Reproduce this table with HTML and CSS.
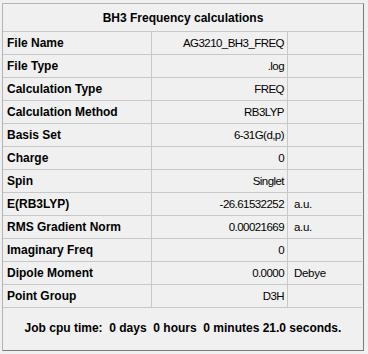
FILE: index.html
```html
<!DOCTYPE html>
<html lang="en">
  <head>
    <meta charset="UTF-8" />
    <title>BH3 Frequency calculations</title>
    <link rel="stylesheet" href="styles.css">
  </head>
  <body>
    <section class="summary">
      <h1 class="summary__title">BH3 Frequency calculations</h1>
      <div class="summary__grid">
        <div class="summary__key">File Name</div><div class="summary__value">AG3210_BH3_FREQ</div><div class="summary__unit"></div>
        <div class="summary__key">File Type</div><div class="summary__value">.log</div><div class="summary__unit"></div>
        <div class="summary__key">Calculation Type</div><div class="summary__value">FREQ</div><div class="summary__unit"></div>
        <div class="summary__key">Calculation Method</div><div class="summary__value">RB3LYP</div><div class="summary__unit"></div>
        <div class="summary__key">Basis Set</div><div class="summary__value">6-31G(d,p)</div><div class="summary__unit"></div>
        <div class="summary__key">Charge</div><div class="summary__value">0</div><div class="summary__unit"></div>
        <div class="summary__key">Spin</div><div class="summary__value">Singlet</div><div class="summary__unit"></div>
        <div class="summary__key">E(RB3LYP)</div><div class="summary__value">-26.61532252</div><div class="summary__unit">a.u.</div>
        <div class="summary__key">RMS Gradient Norm</div><div class="summary__value">0.00021669</div><div class="summary__unit">a.u.</div>
        <div class="summary__key">Imaginary Freq</div><div class="summary__value">0</div><div class="summary__unit"></div>
        <div class="summary__key">Dipole Moment</div><div class="summary__value">0.0000</div><div class="summary__unit">Debye</div>
        <div class="summary__key">Point Group</div><div class="summary__value">D3H</div><div class="summary__unit"></div>
      </div>
      <p class="summary__footer">Job cpu time:  0 days  0 hours  0 minutes 21.0 seconds.</p>
    </section>
  </body>
</html>
```

FILE: styles.css
```css
:root {
  --color-text: #000;
  --color-bg: #f0f0f0;
  --color-line: #c8c8c8;
  --color-frame-light: #b4b4b4;
  --color-frame-dark: #7a7a7a;
  font-family: 'Liberation Sans', Arial, sans-serif;
  font-size: 11.5px;
  color: var(--color-text);
}
* {
  margin: 0;
  padding: 0;
  box-sizing: border-box;
}
body {
  width: 368px;
  height: 354px;
  background-color: var(--color-bg);
  padding: 3px 4px 3px 2px;
}
/* frame */
.summary {
  height: 348px;
  border: 1px solid;
  border-color: var(--color-frame-light) var(--color-frame-dark) var(--color-frame-dark) var(--color-frame-light);
  display: flex;
  flex-direction: column;
}
.summary__title {
  height: 28px;
  display: flex;
  align-items: center;
  justify-content: center;
  font-size: 12px;
  font-weight: 700;
  border-bottom: 1px solid var(--color-line);
  padding-top: 1px;
}
/* rows */
.summary__grid {
  display: grid;
  grid-template-columns: 149px 136px 1fr;
  grid-auto-rows: 23px;
  margin-right: 1px;
}
.summary__grid > div {
  display: flex;
  align-items: center;
  border-bottom: 1px solid var(--color-line);
  white-space: nowrap;
}
.summary__key {
  padding-left: 4px;
  font-size: 12px;
  font-weight: 700;
  border-right: 1px solid var(--color-line);
}
.summary__value {
  justify-content: flex-end;
  padding-right: 3px;
  letter-spacing: -0.55px;
  border-right: 1px solid var(--color-line);
}
.summary__unit {
  padding-left: 6px;
  letter-spacing: -0.3px;
}
/* cpu time */
.summary__footer {
  flex: 1;
  display: flex;
  align-items: center;
  justify-content: center;
  font-size: 12px;
  font-weight: 700;
  white-space: pre;
  padding-bottom: 2px;
}
```
